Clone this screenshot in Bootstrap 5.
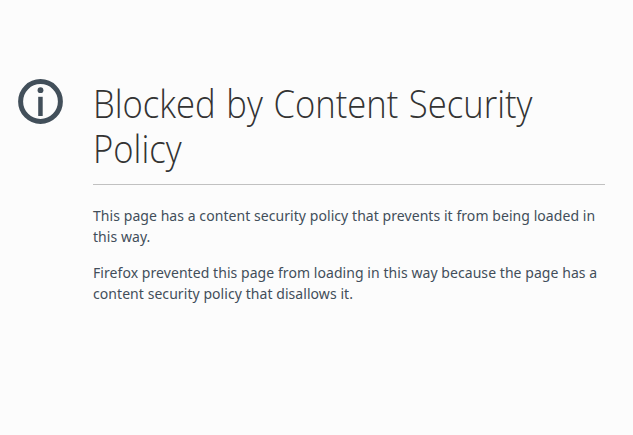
<!DOCTYPE html>
<html lang="en">
<head>
<meta charset="utf-8">
<meta name="viewport" content="width=device-width, initial-scale=1">
<title>Blocked by Content Security Policy</title>
<link href="https://cdn.jsdelivr.net/npm/bootstrap@5.3.0/dist/css/bootstrap.min.css" rel="stylesheet">
<style>
body{background:#fcfcfc;color:#424e5a;font-family:"Noto Sans","Open Sans",sans-serif;font-size:14px;line-height:21px}
.error-page{padding:79px 28px 0 18px;gap:30px}
.error-icon{width:45px;height:45px}
.error-title{color:#333;font-family:"Open Sans","Noto Sans",sans-serif;font-weight:300;font-size:38px;line-height:45px;padding:2px 0 13px;border-bottom:1px solid #c1c1c1;margin-bottom:20px}
.title-text{display:block;transform:scaleX(.911);transform-origin:0 50%;word-spacing:1.8px}
.error-text{margin-bottom:15px;letter-spacing:.063px}
</style>
</head>
<body>
<main class="error-page d-flex align-items-start">
<svg class="error-icon flex-shrink-0" viewBox="0 0 45 45" aria-hidden="true"><circle cx="22.5" cy="22.5" r="19.9" fill="none" stroke="#424f5a" stroke-width="5"/><circle cx="22.5" cy="11.2" r="2.9" fill="#424f5a"/><path d="M20.2 17.8h4.5V37h-4.5z" fill="#424f5a"/></svg>
<div class="flex-grow-1">
<h1 class="error-title"><span class="title-text">Blocked by Content Security<br>Policy</span></h1>
<p class="error-text">This page has a content security policy that prevents it from being loaded in<br>this way.</p>
<p class="error-text">Firefox prevented this page from loading in this way because the page has a<br>content security policy that disallows it.</p>
</div>
</main>
<script src="https://cdn.jsdelivr.net/npm/bootstrap@5.3.0/dist/js/bootstrap.bundle.min.js"></script>
</body>
</html>
